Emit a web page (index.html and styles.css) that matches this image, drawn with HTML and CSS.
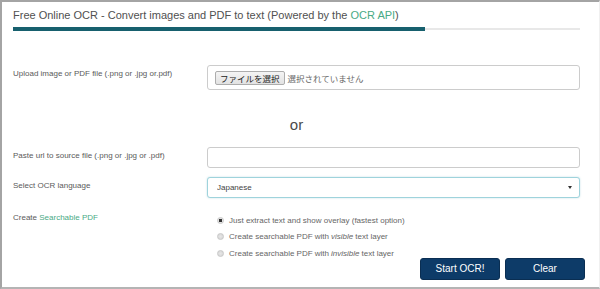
FILE: index.html
```html
<!DOCTYPE html>
<html lang="en">
<head>
    <meta charset="UTF-8">
    <meta name="viewport" content="width=device-width, initial-scale=1.0">
    <title>Free Online OCR</title>
    <link rel="stylesheet" href="styles.css">
</head>
<body>

    <div class="frame">
        <div class="header">
            <h1 class="title">Free Online OCR - Convert images and PDF to text (Powered by the <a href="#" class="link">OCR API</a>)</h1>
            <div class="bar"><div class="bar-fill"></div></div>
        </div>

        <form class="ocr-form" onsubmit="return false">
            <div class="row upload-row">
                <label class="label">Upload image or PDF file (.png or .jpg or.pdf)</label>
                <div class="field file-box">
                    <span class="file-button">ファイルを選択</span>
                    <span class="file-name">選択されていません</span>
                </div>
            </div>

            <div class="or">or</div>

            <div class="row">
                <label class="label" for="url">Paste url to source file (.png or .jpg or .pdf)</label>
                <input id="url" class="field input" type="text">
            </div>

            <div class="row">
                <label class="label" for="lang">Select OCR language</label>
                <div class="field select-wrap">
                    <select id="lang" class="select">
                        <option>Japanese</option>
                    </select>
                </div>
            </div>

            <div class="row options-row">
                <div class="label">Create <a href="#" class="link">Searchable PDF</a></div>
                <div class="options">
                    <label class="option"><input type="radio" name="mode" class="radio" checked> Just extract text and show overlay (fastest option)</label>
                    <label class="option"><input type="radio" name="mode" class="radio"> Create searchable PDF with <em>visible</em> text layer</label>
                    <label class="option"><input type="radio" name="mode" class="radio"> Create searchable PDF with <em>invisible</em> text layer</label>
                </div>
            </div>

            <div class="actions">
                <button class="btn" type="submit">Start OCR!</button>
                <button class="btn" type="reset">Clear</button>
            </div>
        </form>
    </div>

</body>
</html>
```

FILE: styles.css
```css
* {
    margin: 0;
    padding: 0;
    box-sizing: border-box;
}

body {
    font-family: "Liberation Sans", Arial, "Noto Sans CJK JP", sans-serif;
    background: #fff;
    color: #555;
}

.frame {
    width: 600px;
    height: 289px;
    border-top: 2px solid #a4a4a4;
    border-left: 2px solid #a4a4a4;
    border-bottom: 2px solid #b4b4b4;
    border-right: 1px solid #f0f0f0;
    padding: 0 0 0 11px;
    overflow: hidden;
}

.header {
    width: 567px;
}

.title {
    font-size: 11px;
    font-weight: normal;
    line-height: 14px;
    padding-top: 6px;
    color: #505050;
}

.link {
    color: #4aaa85;
    text-decoration: none;
}

.bar {
    margin-top: 5px;
    height: 4px;
    background: linear-gradient(#fff 1px, #e8e8e8 1px, #e8e8e8 3px, #fff 3px);
}

.bar-fill {
    width: 412px;
    height: 4px;
    background: #17606e;
}

.ocr-form {
    width: 572px;
    font-size: 8px;
}

.row {
    display: flex;
    margin-top: 9px;
}

.upload-row {
    margin-top: 34px;
}

.label {
    width: 194px;
    flex: none;
    padding-top: 4px;
    line-height: 10px;
    color: #5a5a5a;
}

.field {
    width: 373px;
    height: 21px;
    border: 1px solid #ccc;
    border-radius: 3px;
    background: #fff;
}

.file-box {
    height: 25px;
    display: flex;
    align-items: center;
    padding-left: 7px;
    font-family: "Noto Sans CJK JP", sans-serif;
    font-size: 8.5px;
}

.file-button {
    height: 14px;
    line-height: 12px;
    padding: 0 4px;
    border: 1px solid #adadad;
    border-radius: 2px;
    background: linear-gradient(#f4f4f4, #e2e2e2);
    color: #222;
}

.file-name {
    margin-left: 3px;
    color: #666;
}

.or {
    margin: 26px 0 0 170px;
    font-size: 15px;
    line-height: 18px;
    text-align: center;
    width: 227px;
    color: #4a4a4a;
}

.or + .row {
    margin-top: 13px;
}

.input {
    outline: none;
}

.select-wrap {
    position: relative;
    border-color: #9fd3dc;
    box-shadow: 0 0 2px rgba(102, 175, 190, 0.4);
}

.select-wrap::after {
    content: '';
    position: absolute;
    right: 7px;
    top: 8px;
    border-left: 2px solid transparent;
    border-right: 2px solid transparent;
    border-top: 3px solid #333;
}

.select {
    appearance: none;
    -webkit-appearance: none;
    width: 100%;
    height: 100%;
    border: none;
    background: transparent;
    padding-left: 9px;
    font-family: "Liberation Sans", Arial, sans-serif;
    font-size: 8px;
    color: #444;
    outline: none;
}

.options-row {
    margin-top: 11px;
}

.options {
    padding-left: 10px;
    margin-top: 3px;
}

.option {
    display: flex;
    align-items: center;
    height: 16.5px;
    color: #666;
}

.option em {
    margin: 0 2px;
}

.radio {
    appearance: none;
    -webkit-appearance: none;
    width: 7px;
    height: 7px;
    margin-right: 5px;
    border-radius: 50%;
    border: 1px solid #c8c8c8;
    background: radial-gradient(circle, #e6e6e6, #d4d4d4);
}

.radio:checked {
    background: radial-gradient(circle, #333 0, #333 1.5px, #e4e4e4 2px);
}

.actions {
    display: flex;
    justify-content: flex-end;
    gap: 5px;
    width: 572px;
    margin-top: -4px;
}

.btn {
    width: 80px;
    height: 22px;
    border: 1px solid #0a2e52;
    border-radius: 3px;
    background: #0d3b68;
    color: #fff;
    font-family: "Liberation Sans", Arial, sans-serif;
    font-size: 10px;
    cursor: pointer;
}
```
